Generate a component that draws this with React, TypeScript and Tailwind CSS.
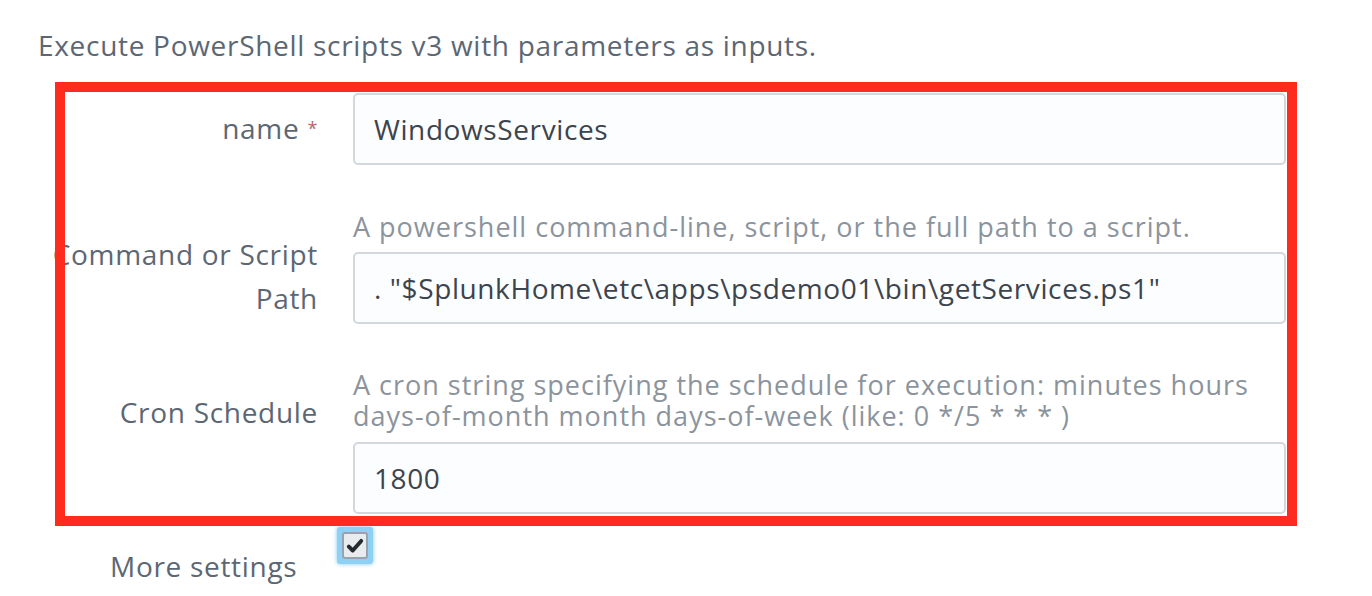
import React from "react";

const font = { fontFamily: "'Open Sans', Lato, sans-serif" };

function Field({ value }: { value: string }) {
  return (
    <div className="h-[72px] w-full rounded-[5px] border-2 border-[#d2d8de] bg-[#fcfdfe] pl-[19px] flex items-center text-[28px] tracking-[0.6px] text-[#3c444d]">
      {value}
    </div>
  );
}

export default function App() {
  return (
    <div className="w-[1372px] h-[596px] bg-white overflow-hidden tracking-[0.7px]" style={font}>
      <p className="pl-[38px] pt-[29px] text-[28px] leading-[32px] text-[#5c6773]">
        Execute PowerShell scripts v3 with parameters as inputs.
      </p>

      {/* --- FORM (with red highlight overlay) --- */}
      <div className="relative mt-[21px] w-[1297px] pt-[11px] pb-[12px]">
        <div className="absolute left-[55px] top-0 right-0 bottom-0 border-[10px] border-[#ff2b1f] pointer-events-none z-10" />

        {/* name */}
        <div className="flex items-start">
          <div className="w-[318px] shrink-0 pt-[19px] text-right text-[28px] leading-[32px] text-[#5c6773]">
            name <span className="text-[#b8656a] text-[18px] align-top">*</span>
          </div>
          <div className="ml-[35px] flex-1 mr-[11px]">
            <Field value="WindowsServices" />
          </div>
        </div>

        {/* command */}
        <div className="flex items-start mt-[46px]">
          <div className="w-[318px] shrink-0 pl-[30px] pt-[21px] text-right text-[28px] leading-[44px] text-[#5c6773]">
            Command or Script Path
          </div>
          <div className="ml-[35px] flex-1 mr-[11px]">
            <p className="text-[27px] leading-[31px] tracking-[1px] text-[#8b949d] mb-[10px]">
              A powershell command-line, script, or the full path to a script.
            </p>
            <Field value={'. "$SplunkHome\\etc\\apps\\psdemo01\\bin\\getServices.ps1"'} />
          </div>
        </div>

        {/* cron */}
        <div className="flex items-start mt-[45px]">
          <div className="w-[318px] shrink-0 pt-[27px] text-right text-[28px] leading-[32px] text-[#5c6773]">
            Cron Schedule
          </div>
          <div className="ml-[35px] flex-1 mr-[11px]">
            <p className="text-[27px] leading-[31px] tracking-[1px] text-[#8b949d] mb-[11px]">
              A cron string specifying the schedule for execution: minutes hours days-of-month month days-of-week (like: 0 */5 * * * )
            </p>
            <Field value="1800" />
          </div>
        </div>
      </div>

      {/* --- MORE SETTINGS --- */}
      <div className="flex items-start mt-[1px]">
        <div className="w-[337px] shrink-0 pl-[110px] pt-[23px] text-[28px] leading-[32px] text-[#5c6773]">More settings</div>
        <div className="w-[36px] h-[37px] rounded-[3px] bg-[#8fd0f5] p-[5px] shadow-[0_0_4px_#7cc7f5]">
          <div className="w-full h-full rounded-[3px] border-2 border-[#9aa3ab] bg-[#e9ecef] flex items-center justify-center">
            <svg viewBox="0 0 16 16" className="w-[18px] h-[18px]">
              <path d="M2.5 8.5 L6 12 L13.5 3.5" fill="none" stroke="#262b30" strokeWidth="3.5" strokeLinecap="round" strokeLinejoin="round" />
            </svg>
          </div>
        </div>
      </div>
    </div>
  );
}
